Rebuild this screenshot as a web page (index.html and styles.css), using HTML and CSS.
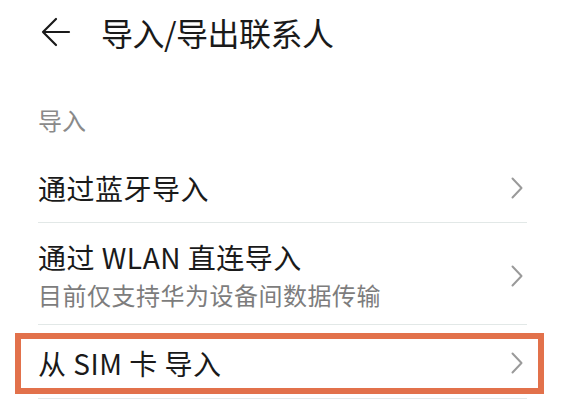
FILE: index.html
```html
<!DOCTYPE html>
<html>
<head>
    <meta name="viewport" content="width=device-width, initial-scale=1">
    <link rel="stylesheet" href="styles.css">
</head>
<body>

<div class="header">
    <svg class="back" width="30" height="30" viewBox="0 0 30 30">
        <path d="M15 2 L2 15 L15 28 M2 15 H28" fill="none" stroke="#1a1a1a" stroke-width="2.2" stroke-linecap="round" stroke-linejoin="round"/>
    </svg>
    <h1 class="title">导入/导出联系人</h1>
</div>

<div class="section-label">导入</div>

<div class="list">
    <div class="item item-first">
        <div class="item-text">
            <div class="item-title">通过蓝牙导入</div>
        </div>
        <svg class="chevron" width="12" height="22" viewBox="0 0 12 22">
            <path d="M1.5 1.5 L10.5 11 L1.5 20.5" fill="none" stroke="#9a9a9a" stroke-width="2" stroke-linecap="round" stroke-linejoin="round"/>
        </svg>
    </div>

    <div class="item item-double">
        <div class="item-text">
            <div class="item-title">通过 WLAN 直连导入</div>
            <div class="item-sub">目前仅支持华为设备间数据传输</div>
        </div>
        <svg class="chevron" width="12" height="22" viewBox="0 0 12 22">
            <path d="M1.5 1.5 L10.5 11 L1.5 20.5" fill="none" stroke="#9a9a9a" stroke-width="2" stroke-linecap="round" stroke-linejoin="round"/>
        </svg>
    </div>

    <div class="item item-marked">
        <div class="item-text">
            <div class="item-title">从 SIM 卡 导入</div>
        </div>
        <svg class="chevron" width="12" height="22" viewBox="0 0 12 22">
            <path d="M1.5 1.5 L10.5 11 L1.5 20.5" fill="none" stroke="#9a9a9a" stroke-width="2" stroke-linecap="round" stroke-linejoin="round"/>
        </svg>
    </div>
</div>

</body>
</html>
```

FILE: styles.css
```css
body {
    font-family: "Noto Sans CJK SC", "Noto Sans", sans-serif;
    background-color: #fff;
    color: #1a1a1a;
    margin: 0;
    padding: 0;
    overflow: hidden;
}
.header {
    display: flex;
    align-items: center;
    height: 63px;
    padding-left: 41px;
}
.back {
    flex: none;
}
.title {
    margin: 0 0 0 30px;
    font-size: 32px;
    font-weight: 400;
    line-height: 40px;
    letter-spacing: -0.5px;
    color: #1a1a1a;
}
.section-label {
    padding: 41px 0 17px 38px;
    font-size: 24px;
    line-height: 32px;
    color: #8a8a8a;
}
.list {
    margin: 0 37px 0 38px;
}
.item {
    position: relative;
    display: flex;
    align-items: center;
    justify-content: space-between;
    box-sizing: border-box;
    padding-right: 4px;
    border-bottom: 1px solid #e2e8e7;
}
.item-first {
    height: 70px;
}
.item-double {
    height: 102px;
    padding-top: 5px;
}
.item-marked {
    height: 74px;
    padding-top: 3px;
}
.item-title {
    font-size: 28px;
    line-height: 38px;
    letter-spacing: 0.5px;
    color: #1a1a1a;
}
.item-sub {
    font-size: 24px;
    line-height: 38px;
    letter-spacing: 0.5px;
    color: #7d7d7d;
}
.chevron {
    flex: none;
}
/* orange highlight frame drawn over the SIM row */
.item-marked::after {
    content: "";
    position: absolute;
    left: -23px;
    right: -17px;
    top: 8px;
    bottom: 4px;
    border: 6px solid #e2714b;
    pointer-events: none;
}
```
